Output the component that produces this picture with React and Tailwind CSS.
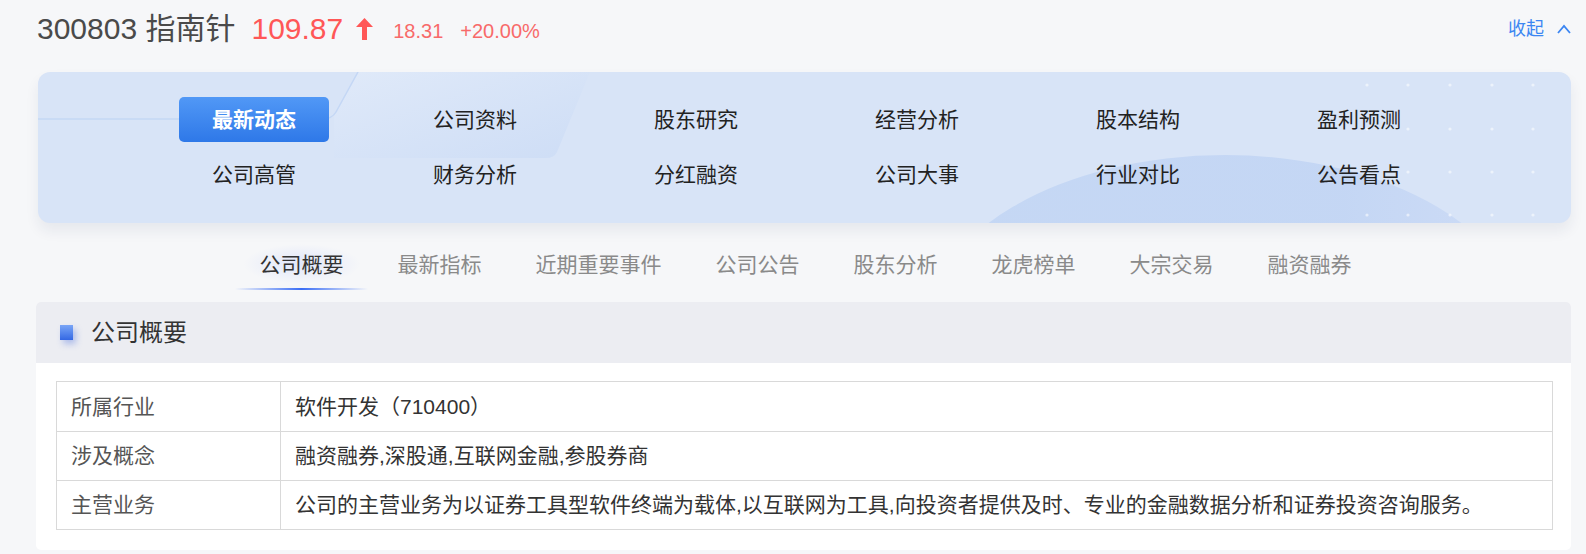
const navRows = [
  ['最新动态', '公司资料', '股东研究', '经营分析', '股本结构', '盈利预测'],
  ['公司高管', '财务分析', '分红融资', '公司大事', '行业对比', '公告看点'],
];

const tabs = ['公司概要', '最新指标', '近期重要事件', '公司公告', '股东分析', '龙虎榜单', '大宗交易', '融资融券'];

const rows = [
  { label: '所属行业', value: '软件开发（710400）' },
  { label: '涉及概念', value: '融资融券,深股通,互联网金融,参股券商' },
  {
    label: '主营业务',
    value: '公司的主营业务为以证券工具型软件终端为载体,以互联网为工具,向投资者提供及时、专业的金融数据分析和证券投资咨询服务。',
  },
];

const dotsX = [1329, 1370, 1412, 1454, 1495];
const dotsY = [13, 57, 100, 143];

function PanelArt() {
  return (
    <svg
      className="absolute inset-0 w-full h-full pointer-events-none"
      viewBox="0 0 1533 151"
      preserveAspectRatio="none"
    >
      <defs>
        <linearGradient id="slab" x1="0" y1="0" x2="1" y2="1">
          <stop offset="0" stopColor="#e3ecfa" stopOpacity="0.7" />
          <stop offset="1" stopColor="#c9daf5" stopOpacity="0.7" />
        </linearGradient>
        <linearGradient id="arc" x1="0" y1="0" x2="1" y2="0">
          <stop offset="0" stopColor="#c3d6f4" stopOpacity="0.9" />
          <stop offset="0.7" stopColor="#c2d5f4" stopOpacity="0.9" />
          <stop offset="1" stopColor="#c6d6f5" stopOpacity="0.6" />
        </linearGradient>
      </defs>
      <path d="M320 0 L552 0 L519 80 Q516 86 508 86 L296 86 L296 44 Z" fill="url(#slab)" />
      <path
        d="M320 0 L298 40 Q294 47 284 47 L0 47"
        fill="none"
        stroke="#c4d7f5"
        strokeWidth="1.5"
      />
      <ellipse cx="1187" cy="260" rx="300" ry="177" fill="url(#arc)" />
      {dotsY.map((y) =>
        dotsX.map((x) => <circle key={x + '-' + y} cx={x} cy={y} r="1.6" fill="#ffffff" fillOpacity="0.55" />)
      )}
    </svg>
  );
}

export default function App() {
  return (
    <div className="min-h-screen w-full bg-[#f6f7f9] pl-[36px] pr-[15px] font-['Liberation_Sans','Noto_Sans_CJK_SC',sans-serif] text-[#333]">
      {/* stock header */}
      <div className="flex h-[58px] items-center">
        <span className="ml-[1px] text-[30px] leading-none text-[#4a4a4a]">300803 指南针</span>
        <span className="ml-[16px] text-[30px] leading-none text-[#ff5757]">109.87</span>
        <svg className="ml-[13px]" width="17" height="22" viewBox="0 0 17 22">
          <path d="M8.5 0 L17 9 L11 9 L11 22 L6 22 L6 9 L0 9 Z" fill="#ff5757" />
        </svg>
        <span className="ml-[20px] mt-[4px] text-[20px] leading-none text-[#f86a6a]">18.31</span>
        <span className="ml-[17px] mt-[4px] text-[20px] leading-none text-[#f86a6a]">+20.00%</span>
        <div className="ml-auto flex items-center gap-[13px] text-[18px] text-[#3c86f2]">
          <span>收起</span>
          <svg width="14" height="10" viewBox="0 0 14 10">
            <polyline points="1,9 7,2 13,9" fill="none" stroke="#3c86f2" strokeWidth="1.8" />
          </svg>
        </div>
      </div>

      {/* quick nav panel */}
      <div className="relative ml-[2px] mt-[14px] overflow-hidden rounded-[12px] bg-[#d8e4f7] shadow-[0_8px_14px_rgba(30,40,80,0.07)]">
        <PanelArt />
        <div className="relative flex flex-col gap-y-[10px] pl-[4px] pt-[25px] pb-[26px]">
          {navRows.map((row, ri) => (
            <div key={ri} className="grid grid-cols-[repeat(6,221px)] justify-center">
              {row.map((name) => {
                const active = name === '最新动态';
                return (
                  <div key={name} className="flex h-[45px] items-center justify-center">
                    {active ? (
                      <div className="flex h-[45px] w-[150px] items-center justify-center rounded-[5px] bg-gradient-to-b from-[#5198f6] to-[#2e78e8] text-[21px] font-bold text-white">
                        {name}
                      </div>
                    ) : (
                      <span className="text-[21px] text-[#222]">{name}</span>
                    )}
                  </div>
                );
              })}
            </div>
          ))}
        </div>
      </div>

      {/* sub tabs */}
      <div className="flex justify-center pl-[4px] pt-[27px]">
        {tabs.map((t, i) => (
          <div key={t} className="relative px-[27px] pb-[10px]">
            {i === 0 && (
              <>
                <div className="absolute left-[10px] right-[10px] top-[-6px] bottom-[6px] rounded-full bg-[radial-gradient(ellipse_at_center,rgba(110,140,255,0.16),rgba(110,140,255,0)_70%)]" />
                <div className="absolute bottom-0 left-[2px] right-[3px] h-[2px] bg-gradient-to-r from-[rgba(60,110,245,0)] via-[#3b6ef5] to-[rgba(60,110,245,0)]" />
              </>
            )}
            <span className={`relative block h-[30px] text-[21px] leading-[30px] ${i === 0 ? 'text-[#333]' : 'text-[#8a8a8a]'}`}>
              {t}
            </span>
          </div>
        ))}
      </div>

      {/* overview card */}
      <div className="mt-[12px] overflow-hidden rounded-[5px] bg-white">
        <div className="flex h-[61px] items-center bg-[#ecedf2]">
          <div className="ml-[24px] h-[15px] w-[13px] bg-gradient-to-b from-[#7aa5f6] to-[#3467e3] shadow-[3px_4px_6px_rgba(60,100,220,0.35)]" />
          <span className="ml-[18px] text-[24px] text-[#333]">公司概要</span>
        </div>
        <div className="pl-[20px] pr-[18px] pt-[18px] pb-[20px]">
          <div className="border border-[#d9d9d9]">
            {rows.map((r, i) => (
              <div key={r.label} className={`flex h-[49px] ${i > 0 ? 'border-t border-[#d9d9d9]' : ''}`}>
                <div className="flex w-[224px] shrink-0 items-center border-r border-[#d9d9d9] pl-[14px] text-[21px] text-[#555]">
                  {r.label}
                </div>
                <div className="flex items-center pl-[14px] text-[21px] text-[#333]">{r.value}</div>
              </div>
            ))}
          </div>
        </div>
      </div>
    </div>
  );
}
